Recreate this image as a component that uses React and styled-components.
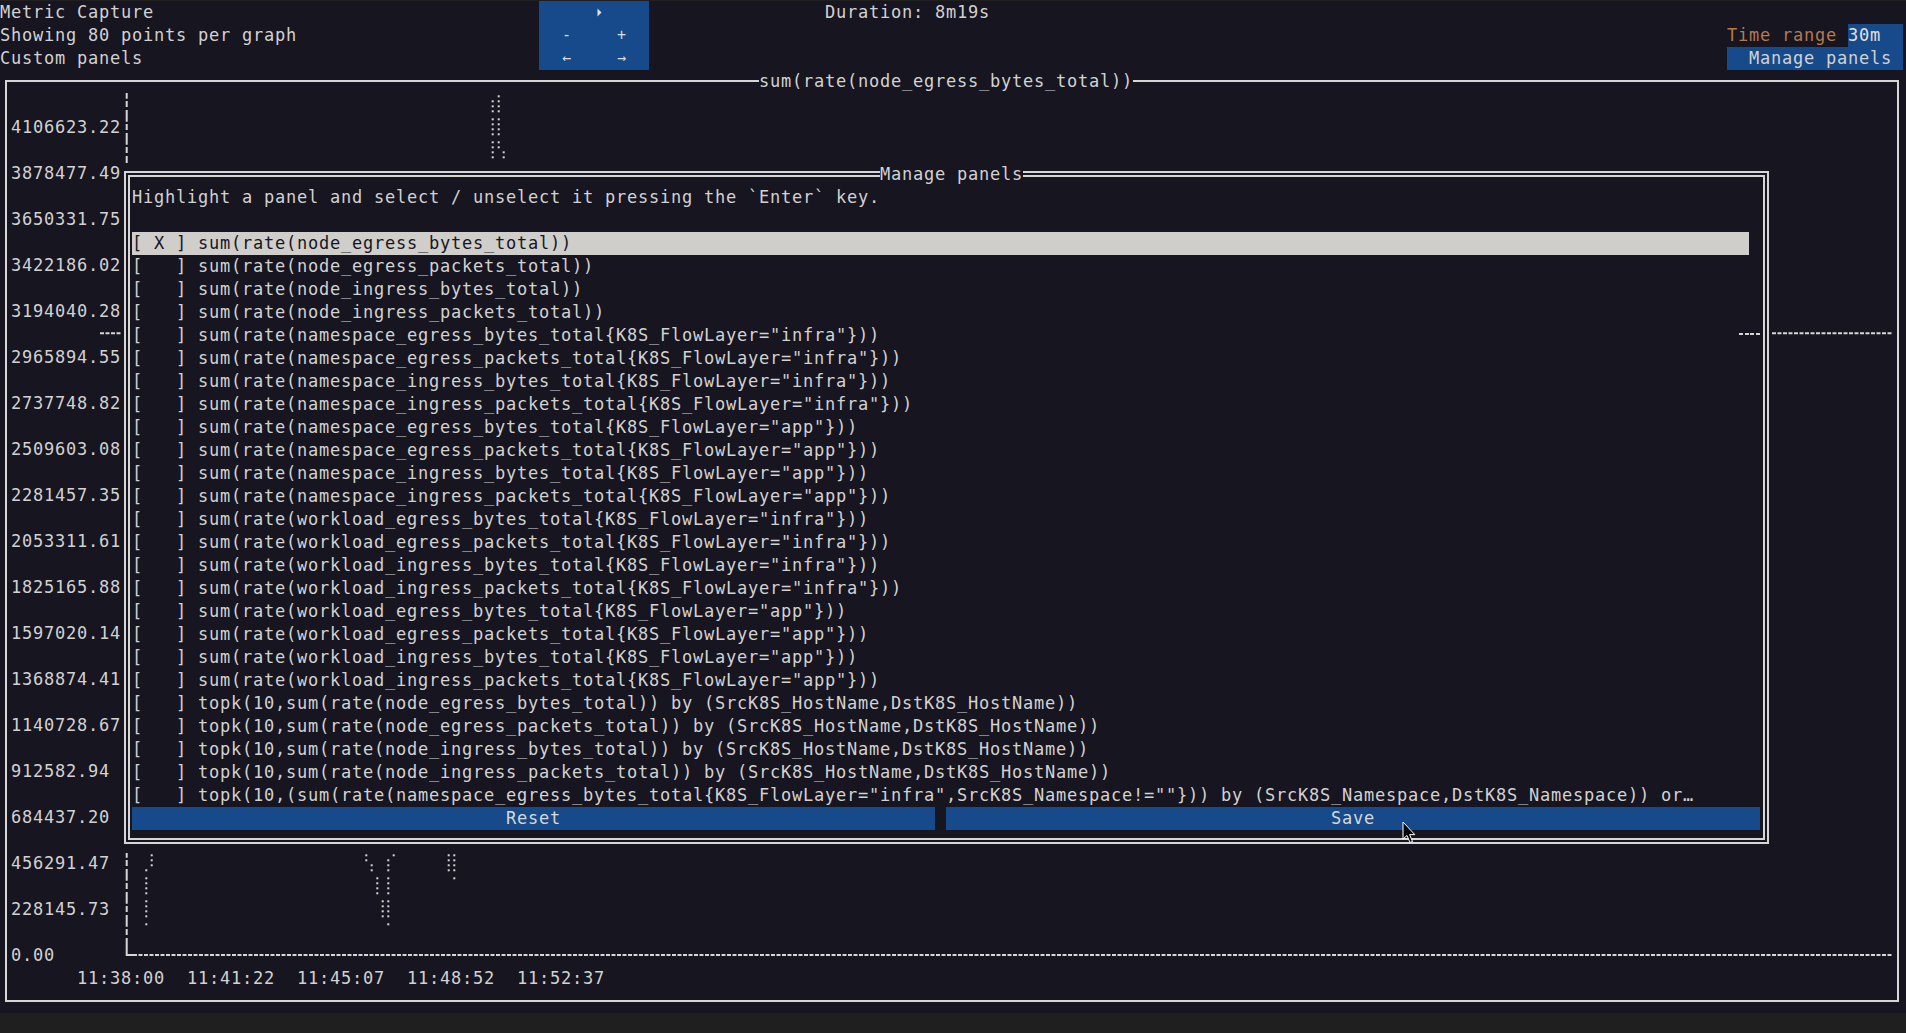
import React from "react";
import styled, { createGlobalStyle } from "styled-components";

const C = {
  bg: "#161520",
  fg: "#d2d2d2",
  line: "#d6d6d6",
  blue: "#164a8b",
  hi: "#cfceca",
  hiText: "#17161f",
  orange: "#b47a4e",
  chrome: "#1f1f1f",
  dot: "#d4d4d4",
};

const Global = createGlobalStyle`
  html, body { margin: 0; padding: 0; background: ${C.chrome}; }
  body {
    width: 1906px;
    height: 1033px;
    overflow: hidden;
    font-family: "DejaVu Sans Mono", "Liberation Mono", monospace;
  }
`;

const Terminal = styled.main`
  position: relative;
  margin-top: 1px;
  width: 1906px;
  height: 1012px;
  background: ${C.bg};
  color: ${C.fg};
  font-size: 17px;
  letter-spacing: 0.765px;
  line-height: 23px;
  white-space: pre;
  overflow: hidden;
`;

/* ---------- header ---------- */
const Header = styled.header`
  display: grid;
  grid-template-columns: 539px 110px 1078px 176px;
  grid-template-rows: repeat(3, 23px);
  height: 69px;
`;

const InfoLines = styled.div`
  grid-column: 1;
  grid-row: 1 / 4;
  display: flex;
  flex-direction: column;
`;

const Line = styled.div`
  height: 23px;
`;

const NavPad = styled.div`
  grid-column: 2;
  grid-row: 1 / 4;
  background: ${C.blue};
  display: grid;
  grid-template-columns: repeat(10, 11px);
  grid-template-rows: repeat(3, 23px);
`;

const NavKey = styled.span`
  grid-column: ${(p) => p.$col + 1};
  grid-row: ${(p) => p.$row + 1};
  display: flex;
  align-items: center;
  justify-content: center;
  letter-spacing: 0;
  font-size: 15px;
  color: #dcdcdc;
`;

const Duration = styled.div`
  grid-column: 3;
  grid-row: 1;
  padding-left: 176px;
`;

const Controls = styled.div`
  grid-column: 4;
  grid-row: 2 / 4;
  display: flex;
  flex-direction: column;
`;

const RangeRow = styled.div`
  display: flex;
  height: 23px;
`;

const RangeLabel = styled.span`
  width: 121px;
  color: ${C.orange};
`;

const RangeValue = styled.span`
  width: 55px;
  background: ${C.blue};
  color: #e2e2e2;
`;

const ManageButton = styled.div`
  height: 23px;
  width: 176px;
  box-sizing: border-box;
  padding-left: 22px;
  background: ${C.blue};
`;

/* ---------- main chart panel ---------- */
const MainFrame = styled.section`
  height: 943px;
  box-sizing: border-box;
  padding: 10px 7px 11px 5px;
`;

const MainBox = styled.div`
  position: relative;
  height: 100%;
  box-sizing: border-box;
  border: 2px solid ${C.line};
  padding: 11px 0 0 4px;
`;

const BoxTitle = styled.div`
  position: absolute;
  top: ${(p) => p.$top}px;
  left: ${(p) => p.$left}px;
  height: 23px;
  background: ${C.bg};
  z-index: 1;
`;

const Chart = styled.div`
  display: flex;
  flex-direction: column;
`;

const PlotRow = styled.div`
  display: flex;
  height: 874px;
`;

const YLabels = styled.div`
  width: 110px;
  display: flex;
  flex-direction: column;
`;

const YLabel = styled.div`
  height: 46px;
  display: flex;
  align-items: flex-end;
`;

const PlotSvg = styled.svg`
  display: block;
  overflow: visible;
`;

const TimeRow = styled.div`
  display: flex;
  height: 23px;
  padding-left: 66px;
`;

const TimeLabel = styled.span`
  width: 110px;
`;

/* ---------- modal ---------- */
const Modal = styled.div`
  position: absolute;
  left: 121px;
  top: 162px;
  width: 1650px;
  height: 690px;
  box-sizing: border-box;
  padding: 23px 11px;
  background: ${C.bg};
  display: flex;
  flex-direction: column;
  &::before {
    content: "";
    position: absolute;
    inset: 8px 2px 9px 3px;
    border: 6px double ${C.line};
    pointer-events: none;
  }
`;

const Hint = styled.div`
  height: 23px;
  margin-bottom: 23px;
`;

const PanelList = styled.ul`
  list-style: none;
  margin: 0;
  padding: 0;
  display: flex;
  flex-direction: column;
`;

const PanelRow = styled.li`
  position: relative;
  height: 23px;
  width: 1617px;
  overflow: visible;
  background: ${(p) => (p.$active ? C.hi : "transparent")};
  color: ${(p) => (p.$active ? C.hiText : C.fg)};
  ${(p) =>
    p.$trace
      ? `&::after {
    content: "";
    position: absolute;
    left: 1607px;
    top: 9px;
    width: 22px;
    height: 2px;
    background: repeating-linear-gradient(90deg, ${C.line} 0 4px, transparent 4px 5.5px);
  }`
      : ""}
`;

const ButtonRow = styled.div`
  display: grid;
  grid-template-columns: 803px 814px;
  column-gap: 11px;
  height: 23px;
`;

const DialogButton = styled.div`
  background: ${C.blue};
  text-align: center;
  color: #d8d8d8;
`;

const CursorPointer = styled.svg`
  position: absolute;
  left: 1402px;
  top: 820px;
  z-index: 5;
`;

/* ---------- data ---------- */
const yLabels = [
  "4106623.22", "3878477.49", "3650331.75", "3422186.02", "3194040.28",
  "2965894.55", "2737748.82", "2509603.08", "2281457.35", "2053311.61",
  "1825165.88", "1597020.14", "1368874.41", "1140728.67", "912582.94",
  "684437.20", "456291.47", "228145.73", "0.00",
];

const times = ["11:38:00", "11:41:22", "11:45:07", "11:48:52", "11:52:37"];

const panels = [
  "sum(rate(node_egress_bytes_total))",
  "sum(rate(node_egress_packets_total))",
  "sum(rate(node_ingress_bytes_total))",
  "sum(rate(node_ingress_packets_total))",
  'sum(rate(namespace_egress_bytes_total{K8S_FlowLayer="infra"}))',
  'sum(rate(namespace_egress_packets_total{K8S_FlowLayer="infra"}))',
  'sum(rate(namespace_ingress_bytes_total{K8S_FlowLayer="infra"}))',
  'sum(rate(namespace_ingress_packets_total{K8S_FlowLayer="infra"}))',
  'sum(rate(namespace_egress_bytes_total{K8S_FlowLayer="app"}))',
  'sum(rate(namespace_egress_packets_total{K8S_FlowLayer="app"}))',
  'sum(rate(namespace_ingress_bytes_total{K8S_FlowLayer="app"}))',
  'sum(rate(namespace_ingress_packets_total{K8S_FlowLayer="app"}))',
  'sum(rate(workload_egress_bytes_total{K8S_FlowLayer="infra"}))',
  'sum(rate(workload_egress_packets_total{K8S_FlowLayer="infra"}))',
  'sum(rate(workload_ingress_bytes_total{K8S_FlowLayer="infra"}))',
  'sum(rate(workload_ingress_packets_total{K8S_FlowLayer="infra"}))',
  'sum(rate(workload_egress_bytes_total{K8S_FlowLayer="app"}))',
  'sum(rate(workload_egress_packets_total{K8S_FlowLayer="app"}))',
  'sum(rate(workload_ingress_bytes_total{K8S_FlowLayer="app"}))',
  'sum(rate(workload_ingress_packets_total{K8S_FlowLayer="app"}))',
  "topk(10,sum(rate(node_egress_bytes_total)) by (SrcK8S_HostName,DstK8S_HostName))",
  "topk(10,sum(rate(node_egress_packets_total)) by (SrcK8S_HostName,DstK8S_HostName))",
  "topk(10,sum(rate(node_ingress_bytes_total)) by (SrcK8S_HostName,DstK8S_HostName))",
  "topk(10,sum(rate(node_ingress_packets_total)) by (SrcK8S_HostName,DstK8S_HostName))",
  'topk(10,(sum(rate(namespace_egress_bytes_total{K8S_FlowLayer="infra",SrcK8S_Namespace!=""})) by (SrcK8S_Namespace,DstK8S_Namespace)) or…',
];

/* braille dot columns: [absolute x centre, terminal row, dot indices] */
const dotSpec = [
  [498.7, 4, [0, 1, 2, 3]], [498.7, 5, [0, 1, 2, 3]], [498.7, 6, [0, 1]],
  [492.7, 4, [1, 2, 3]], [492.7, 5, [0, 1, 2, 3]], [492.7, 6, [0, 1, 2, 3]],
  [503.7, 6, [2, 3]],
  [151.7, 37, [0, 1, 2]],
  [146.3, 37, [3]], [146.3, 38, [0, 1, 2, 3]], [146.3, 39, [0, 1, 2, 3]], [146.3, 40, [0]],
  [366.3, 37, [0, 1]], [393.7, 37, [0]], [371.7, 37, [2, 3]],
  [388.3, 37, [1, 2, 3]], [388.3, 38, [0, 1, 2, 3]], [388.3, 39, [0, 1, 2, 3]], [388.3, 40, [0]],
  [377.3, 38, [0, 1, 2, 3]], [382.7, 39, [0, 1, 2, 3]],
  [448.7, 37, [0, 1, 2, 3]], [454.3, 37, [0, 1, 2, 3]], [454.3, 38, [0]],
];

const dots = [];
dotSpec.forEach(([ax, row, idx]) => {
  idx.forEach((d) => {
    dots.push({ x: ax - 121 - 1, y: (row - 4) * 23 + 3.3 + d * 5 - 1 });
  });
});

function PlayIcon() {
  return (
    <svg width="5" height="9" viewBox="0 0 5 9">
      <path d="M0.5 0.5 L4.5 4.5 L0.5 8.5 Z" fill="#e0e0e0" />
    </svg>
  );
}

function Plot() {
  return (
    <PlotSvg width={1771} height={874} viewBox="0 0 1771 874">
      <line x1={5.7} y1={0} x2={5.7} y2={856} stroke={C.line} strokeWidth={2}
        strokeDasharray="11.7 2.3 6 3" strokeDashoffset={6} />
      <path d="M5.7 856 L5.7 862 L12 862" stroke={C.line} strokeWidth={2} fill="none" />
      <line x1={12} y1={862} x2={1771} y2={862} stroke={C.line} strokeWidth={2}
        strokeDasharray="4 1.5" />
      <line x1={-21} y1={240.3} x2={1.3} y2={240.3} stroke={C.line} strokeWidth={2}
        strokeDasharray="4 1.5" />
      <line x1={1651} y1={240.3} x2={1771} y2={240.3} stroke={C.line} strokeWidth={2}
        strokeDasharray="4 1.5" />
      {dots.map((d, i) => (
        <rect key={i} x={d.x} y={d.y} width={2} height={2} fill={C.dot} />
      ))}
    </PlotSvg>
  );
}

export default function App() {
  return (
    <>
      <Global />
      <Terminal>
        <Header>
          <InfoLines>
            <Line>Metric Capture</Line>
            <Line>Showing 80 points per graph</Line>
            <Line>Custom panels</Line>
          </InfoLines>
          <NavPad>
            <NavKey $col={5} $row={0}><PlayIcon /></NavKey>
            <NavKey $col={2} $row={1}>-</NavKey>
            <NavKey $col={7} $row={1}>+</NavKey>
            <NavKey $col={2} $row={2}>←</NavKey>
            <NavKey $col={7} $row={2}>→</NavKey>
          </NavPad>
          <Duration>Duration: 8m19s</Duration>
          <Controls>
            <RangeRow>
              <RangeLabel>Time range </RangeLabel>
              <RangeValue>30m</RangeValue>
            </RangeRow>
            <ManageButton>Manage panels</ManageButton>
          </Controls>
        </Header>

        <MainFrame>
          <MainBox>
            <BoxTitle $top={-12} $left={752}>sum(rate(node_egress_bytes_total))</BoxTitle>
            <Chart>
              <PlotRow>
                <YLabels>
                  {yLabels.map((l) => (
                    <YLabel key={l}>{l}</YLabel>
                  ))}
                </YLabels>
                <Plot />
              </PlotRow>
              <TimeRow>
                {times.map((t) => (
                  <TimeLabel key={t}>{t}</TimeLabel>
                ))}
              </TimeRow>
            </Chart>
          </MainBox>
        </MainFrame>

        <Modal>
          <BoxTitle $top={0} $left={759}>Manage panels</BoxTitle>
          <Hint>Highlight a panel and select / unselect it pressing the `Enter` key.</Hint>
          <PanelList>
            {panels.map((p, i) => (
              <PanelRow key={p} $active={i === 0} $trace={i === 4}>
                {(i === 0 ? "[ X ] " : "[   ] ") + p}
              </PanelRow>
            ))}
          </PanelList>
          <ButtonRow>
            <DialogButton>Reset</DialogButton>
            <DialogButton>Save</DialogButton>
          </ButtonRow>
        </Modal>

        <CursorPointer width="14" height="23" viewBox="0 0 14 23">
          <path d="M1 1 L1 18 L5 14.5 L8 21.5 L10.5 20.5 L7.6 13.6 L12.8 13.6 Z"
            fill="#000" stroke="#fff" strokeWidth="1" strokeLinejoin="round" />
        </CursorPointer>
      </Terminal>
    </>
  );
}
